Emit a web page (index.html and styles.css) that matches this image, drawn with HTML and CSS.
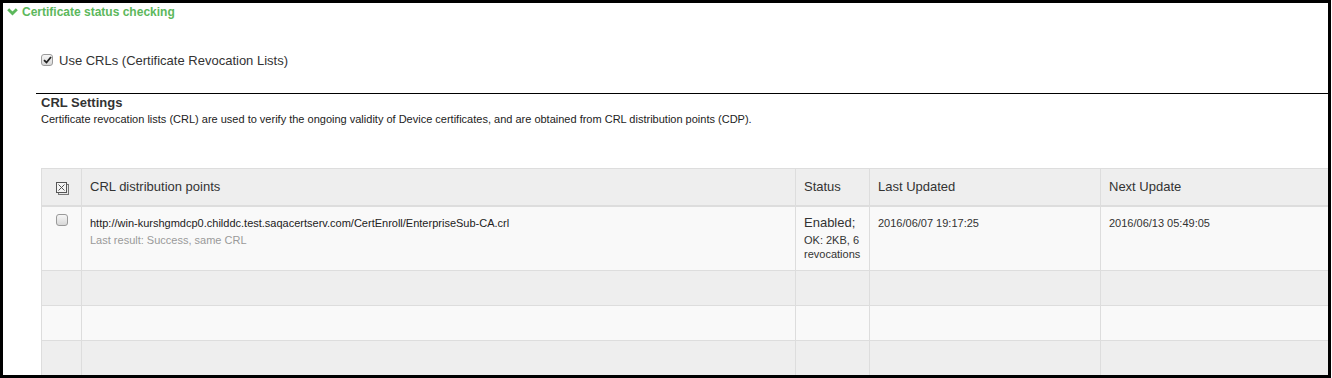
FILE: index.html
```html
<!DOCTYPE html>
<html>
<head>
<meta charset="utf-8">
<link rel="stylesheet" href="styles.css">
</head>
<body>
<div class="frame">
  <div class="section-title">
    <svg class="chev" width="11" height="8" viewBox="0 0 11 8"><path d="M1.2 1.2 L5.5 5.6 L9.8 1.2" fill="none" stroke="#5cb85c" stroke-width="2.8"/></svg>
    <span>Certificate status checking</span>
  </div>
  <div class="use-crl">
    <span class="cb checked"><svg width="9" height="8" viewBox="0 0 9 8"><path d="M1 4.2 L3.5 6.5 L8 1" fill="none" stroke="#222" stroke-width="1.8"/></svg></span>
    <span class="label">Use CRLs (Certificate Revocation Lists)</span>
  </div>
  <div class="settings">
    <h3>CRL Settings</h3>
    <p class="desc">Certificate revocation lists (CRL) are used to verify the ongoing validity of Device certificates, and are obtained from CRL distribution points (CDP).</p>
  </div>
  <table class="crl">
    <colgroup>
      <col class="c1"><col class="c2"><col class="c3"><col class="c4"><col class="c5">
    </colgroup>
    <thead>
      <tr>
        <th class="sel"><svg width="13" height="13" viewBox="0 0 13 13"><rect x="2.5" y="2.5" width="10" height="10" fill="#e8e8e8" stroke="#777"/><rect x="0.5" y="0.5" width="10" height="10" fill="#f4f4f4" stroke="#555"/><path d="M2.5 2.5 L8.5 8.5 M8.5 2.5 L2.5 8.5" stroke="#555" stroke-width="1"/></svg></th>
        <th>CRL distribution points</th>
        <th>Status</th>
        <th>Last Updated</th>
        <th>Next Update</th>
      </tr>
    </thead>
    <tbody>
      <tr class="r1">
        <td class="sel"><span class="cb"></span></td>
        <td><div class="url">http://win-kurshgmdcp0.childdc.test.saqacertserv.com/CertEnroll/EnterpriseSub-CA.crl</div><div class="result">Last result: Success, same CRL</div></td>
        <td><div class="status">Enabled;</div><div class="small">OK: 2KB, 6 revocations</div></td>
        <td><div class="small">2016/06/07 19:17:25</div></td>
        <td><div class="small">2016/06/13 05:49:05</div></td>
      </tr>
      <tr class="odd"><td></td><td></td><td></td><td></td><td></td></tr>
      <tr class="even"><td></td><td></td><td></td><td></td><td></td></tr>
      <tr class="odd"><td></td><td></td><td></td><td></td><td></td></tr>
    </tbody>
  </table>
</div>
</body>
</html>
```

FILE: styles.css
```css
* { box-sizing: border-box; }
html, body { margin: 0; padding: 0; background: #fff; }
body {
  font-family: "Liberation Sans", Arial, sans-serif;
  color: #333;
  width: 1332px;
  height: 378px;
  overflow: hidden;
}
.frame {
  width: 1331px;
  height: 378px;
  border: 3px solid #000;
  overflow: hidden;
  background: #fff;
}
.section-title {
  display: flex;
  align-items: center;
  gap: 4px;
  padding: 0 0 0 4px;
  height: 17px;
  color: #5cb85c;
  font-weight: bold;
  font-size: 12px;
}
.chev { display: block; margin-top: 0; }
.use-crl {
  display: flex;
  align-items: center;
  gap: 6px;
  margin: 31px 0 0 38px;
  height: 18px;
}
.use-crl .label { font-size: 13px; color: #333; }
.cb {
  display: inline-block;
  width: 12px;
  height: 12px;
  border: 1px solid #9a9a9a;
  border-radius: 3px;
  background: linear-gradient(#f6f6f6, #d8d8d8);
  position: relative;
}
.cb.checked svg { position: absolute; left: 1px; top: 1px; }
.settings {
  margin: 24px 0 0 33px;
  border-top: 1px solid #000;
  padding: 0 0 0 5px;
}
.settings h3 {
  margin: 0;
  font-size: 13px;
  font-weight: bold;
  color: #333;
  line-height: 17px;
}
.desc {
  margin: 1px 0 0;
  font-size: 11px;
  line-height: 14px;
  color: #222;
}
.crl {
  margin: 42px 0 0 38px;
  border-collapse: collapse;
  table-layout: fixed;
  width: 1300px;
  font-size: 13px;
}
.c1 { width: 40px; }
.c2 { width: 714px; }
.c3 { width: 74px; }
.c4 { width: 231px; }
.c5 { width: 241px; }
.crl th, .crl td {
  border: 1px solid #ddd;
  text-align: left;
  vertical-align: top;
}
.crl thead th {
  background: #eee;
  height: 37px;
  padding: 8px 8px;
  font-weight: normal;
  color: #333;
  border-bottom: 2px solid #ddd;
  border-top: 1px solid #ddd;
  vertical-align: middle;
}
.crl th.sel { text-align: center; padding: 8px 0 5px 2px; }
.crl th.sel svg { display: block; margin: 0 auto; }
.crl tbody tr.r1 td { background: #f9f9f9; height: 65px; padding: 6px 8px; }
.crl td.sel { text-align: center; padding: 7px 0 0 0 !important; }
.crl tbody tr.odd td { background: #eee; height: 35px; }
.crl tbody tr.even td { background: #f9f9f9; height: 35px; }
.url { font-size: 11px; line-height: 16px; color: #222; margin-top: 2px; }
.result { font-size: 11px; line-height: 16px; color: #999; margin-top: 1px; }
.status { font-size: 13px; line-height: 20px; color: #333; }
.small { font-size: 11px; line-height: 14px; color: #333; }
.crl td .small:only-child { margin-top: 3px; }
```
